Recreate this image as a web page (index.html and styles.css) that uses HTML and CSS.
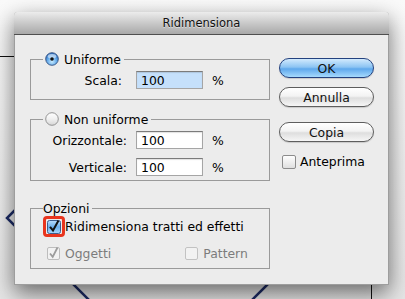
FILE: index.html
```html
<!DOCTYPE html>
<html lang="it">
<head>
    <meta charset="UTF-8">
    <title>Ridimensiona</title>
    <link rel="stylesheet" href="styles.css">
</head>
<body>
    <!-- artwork behind the dialog -->
    <svg class="artwork" width="405" height="299" viewBox="0 0 405 299">
        <line x1="0" y1="56.5" x2="20" y2="56.5" stroke="#111" stroke-width="1"/>
        <line x1="371.5" y1="270" x2="371.5" y2="299" stroke="#111" stroke-width="1"/>
        <polyline points="40,185 7,218 110,321" fill="none" stroke="#1c2b66" stroke-width="2.5"/>
        <line x1="290" y1="262" x2="240" y2="312" stroke="#1c2b66" stroke-width="2.5"/>
    </svg>

    <div class="dialog">
        <div class="titlebar">Ridimensiona</div>
        <div class="dialog-body">
            <div class="left-col">
                <div class="group group-uniform">
                    <div class="legend">
                        <svg class="radio" width="14" height="14" viewBox="0 0 14 14">
                            <defs>
                                <radialGradient id="rbBlue" cx="50%" cy="70%" r="65%">
                                    <stop offset="0" stop-color="#c9ecff"/>
                                    <stop offset="0.6" stop-color="#5fa6e8"/>
                                    <stop offset="1" stop-color="#2f6fbf"/>
                                </radialGradient>
                            </defs>
                            <circle cx="7" cy="7" r="6.3" fill="url(#rbBlue)" stroke="#33507f" stroke-width="0.9"/>
                            <ellipse cx="7" cy="4.3" rx="4.2" ry="2.3" fill="#fff" opacity="0.55"/>
                            <circle cx="7" cy="7" r="1.8" fill="#111"/>
                        </svg>
                        <span>Uniforme</span>
                    </div>
                    <div class="field-row">
                        <label class="field-label label-scala">Scala:</label>
                        <div class="input focused">100</div>
                        <span class="unit">%</span>
                    </div>
                </div>

                <div class="group group-free">
                    <div class="legend">
                        <svg class="radio" width="14" height="14" viewBox="0 0 14 14">
                            <defs>
                                <linearGradient id="rbGray" x1="0" y1="0" x2="0" y2="1">
                                    <stop offset="0" stop-color="#ffffff"/>
                                    <stop offset="0.5" stop-color="#f0f0f0"/>
                                    <stop offset="1" stop-color="#d6d6d6"/>
                                </linearGradient>
                            </defs>
                            <circle cx="7" cy="7" r="6.3" fill="url(#rbGray)" stroke="#8a8a8a" stroke-width="0.9"/>
                        </svg>
                        <span>Non uniforme</span>
                    </div>
                    <div class="field-row">
                        <label class="field-label">Orizzontale:</label>
                        <div class="input">100</div>
                        <span class="unit">%</span>
                    </div>
                    <div class="field-row second">
                        <label class="field-label">Verticale:</label>
                        <div class="input">100</div>
                        <span class="unit">%</span>
                    </div>
                </div>

                <div class="group group-options">
                    <div class="legend legend-text">Opzioni</div>
                    <div class="check-row">
                        <span class="highlight">
                            <svg width="14" height="14" viewBox="0 0 14 14">
                                <defs>
                                    <linearGradient id="cbBlue" x1="0" y1="0" x2="0" y2="1">
                                        <stop offset="0" stop-color="#b9dcfb"/>
                                        <stop offset="0.5" stop-color="#6aaeea"/>
                                        <stop offset="1" stop-color="#a8d8fb"/>
                                    </linearGradient>
                                </defs>
                                <rect x="0.5" y="0.5" width="13" height="13" rx="2" fill="url(#cbBlue)" stroke="#3c5c8c"/>
                                <path d="M3 6.8 L6 10.5 L11.5 0.5" fill="none" stroke="#111" stroke-width="2"/>
                            </svg>
                        </span>
                        <span>Ridimensiona tratti ed effetti</span>
                    </div>
                    <div class="check-row sub">
                        <span class="sub-item">
                            <svg class="check" width="13" height="13" viewBox="0 0 13 13">
                                <rect x="0.5" y="0.5" width="12" height="12" rx="1.5" fill="#f2f2f2" stroke="#bdbdbd"/>
                                <path d="M3 6.5 L5.7 9.8 L10.5 0.5" fill="none" stroke="#9c9c9c" stroke-width="1.8"/>
                            </svg>
                            <span class="disabled">Oggetti</span>
                        </span>
                        <span class="sub-item pattern">
                            <svg class="check" width="13" height="13" viewBox="0 0 13 13">
                                <rect x="0.5" y="0.5" width="12" height="12" rx="1.5" fill="#f2f2f2" stroke="#c2c2c2"/>
                            </svg>
                            <span class="disabled">Pattern</span>
                        </span>
                    </div>
                </div>
            </div>

            <div class="right-col">
                <button class="btn btn-ok">OK</button>
                <button class="btn btn-cancel">Annulla</button>
                <button class="btn btn-copy">Copia</button>
                <div class="preview">
                    <svg class="check" width="14" height="14" viewBox="0 0 14 14">
                        <defs>
                            <linearGradient id="cbGray" x1="0" y1="0" x2="0" y2="1">
                                <stop offset="0" stop-color="#ffffff"/>
                                <stop offset="1" stop-color="#dedede"/>
                            </linearGradient>
                        </defs>
                        <rect x="0.5" y="0.5" width="13" height="13" rx="1.5" fill="url(#cbGray)" stroke="#8c8c8c"/>
                    </svg>
                    <span>Anteprima</span>
                </div>
            </div>
        </div>
    </div>
</body>
</html>
```

FILE: styles.css
```css
body {
    margin: 0;
    width: 405px;
    height: 299px;
    overflow: hidden;
    position: relative;
    background: linear-gradient(180deg, #fafafa, #e6e6e6);
    font-family: "DejaVu Sans", Verdana, sans-serif;
    font-size: 12.4px;
    color: #000;
}

.artwork {
    position: absolute;
    top: 0;
    left: 0;
}

.dialog {
    position: relative;
    z-index: 1;
    margin: 12px 0 0 14px;
    width: 375px;
    height: 273px;
    box-sizing: border-box;
    background: #ececec;
    border: 1px solid #9d9d9d;
    border-top: none;
    border-radius: 4px 4px 0 0;
    box-shadow: 0 8px 22px rgba(0, 0, 0, 0.55);
}

.titlebar {
    height: 22px;
    line-height: 22px;
    text-align: center;
    font-size: 11.5px;
    color: #111;
    text-shadow: 0 1px 0 rgba(255, 255, 255, 0.5);
    background: linear-gradient(180deg, #ececec, #c6c6c6 55%, #a9a9a9);
    border-bottom: 1px solid #4f4f4f;
    border-radius: 4px 4px 0 0;
    margin: 0 -1px;
}

.dialog-body {
    display: flex;
    gap: 9px;
    padding: 0 14px 0 15px;
}

.left-col {
    width: 240px;
    display: flex;
    flex-direction: column;
}

.group {
    border: 1px solid #9a9a9a;
}

.group-uniform {
    margin-top: 24px;
    padding-bottom: 10px;
}

.group-free {
    margin-top: 19px;
    padding-bottom: 4px;
}

.group-options {
    margin-top: 27px;
    padding-bottom: 7px;
}

.legend {
    display: flex;
    align-items: center;
    gap: 5px;
    width: fit-content;
    height: 14px;
    margin: -8px 0 0 12px;
    padding: 0 3px 0 2px;
    background: #ececec;
}

.legend-text {
    padding: 0 3px 0 0;
}

.radio {
    display: block;
}

.field-row {
    display: flex;
    align-items: center;
    height: 18px;
    margin-top: 5px;
}

.field-row.second {
    margin-top: 9px;
}

.field-label {
    width: 96px;
    text-align: right;
    margin-right: 9px;
}

.label-scala {
    width: 91px;
    margin-right: 14px;
}

.input {
    width: 67px;
    height: 18px;
    box-sizing: border-box;
    padding: 1px 0 0 4px;
    line-height: 15px;
    background: #fff;
    border: 1px solid #a5a5a5;
    border-top-color: #7b7b7b;
    box-shadow: inset 0 1px 1px rgba(0, 0, 0, 0.12);
}

.input.focused {
    background: #c5e0fb;
}

.unit {
    margin-left: 9px;
}

.check-row {
    display: flex;
    align-items: center;
    margin-left: 12px;
}

.highlight {
    display: flex;
    align-items: center;
    justify-content: center;
    width: 22px;
    height: 21px;
    box-sizing: border-box;
    margin-top: 1px;
    border: 3px solid #e8351d;
    border-radius: 4px;
}

.highlight svg {
    display: block;
}

.check-row.sub {
    margin: 8px 0 0 16px;
    height: 16px;
}

.sub-item {
    display: flex;
    align-items: center;
    gap: 5px;
}

.sub-item.pattern {
    margin-left: 74px;
}

.check {
    display: block;
}

.disabled {
    color: #7c7c7c;
}

.right-col {
    width: 95px;
    display: flex;
    flex-direction: column;
}

.btn {
    height: 20px;
    width: 95px;
    padding: 0;
    font-family: inherit;
    font-size: 12.4px;
    color: #111;
    border: 1px solid #5e5e5e;
    border-radius: 10px;
    background: linear-gradient(180deg, #ffffff, #f3f3f3 45%, #dedede 55%, #f6f6f6);
    box-shadow: 0 1px 1px rgba(0, 0, 0, 0.15);
}

.btn-ok {
    margin-top: 23px;
    border-color: #24427f;
    background: linear-gradient(180deg, #d2eafd, #8cc4f3 45%, #5fa8ec 55%, #a6dafd);
}

.btn-cancel {
    margin-top: 9px;
}

.btn-copy {
    margin-top: 15px;
}

.preview {
    display: flex;
    align-items: center;
    gap: 4px;
    margin: 12px 0 0 3px;
}
```
